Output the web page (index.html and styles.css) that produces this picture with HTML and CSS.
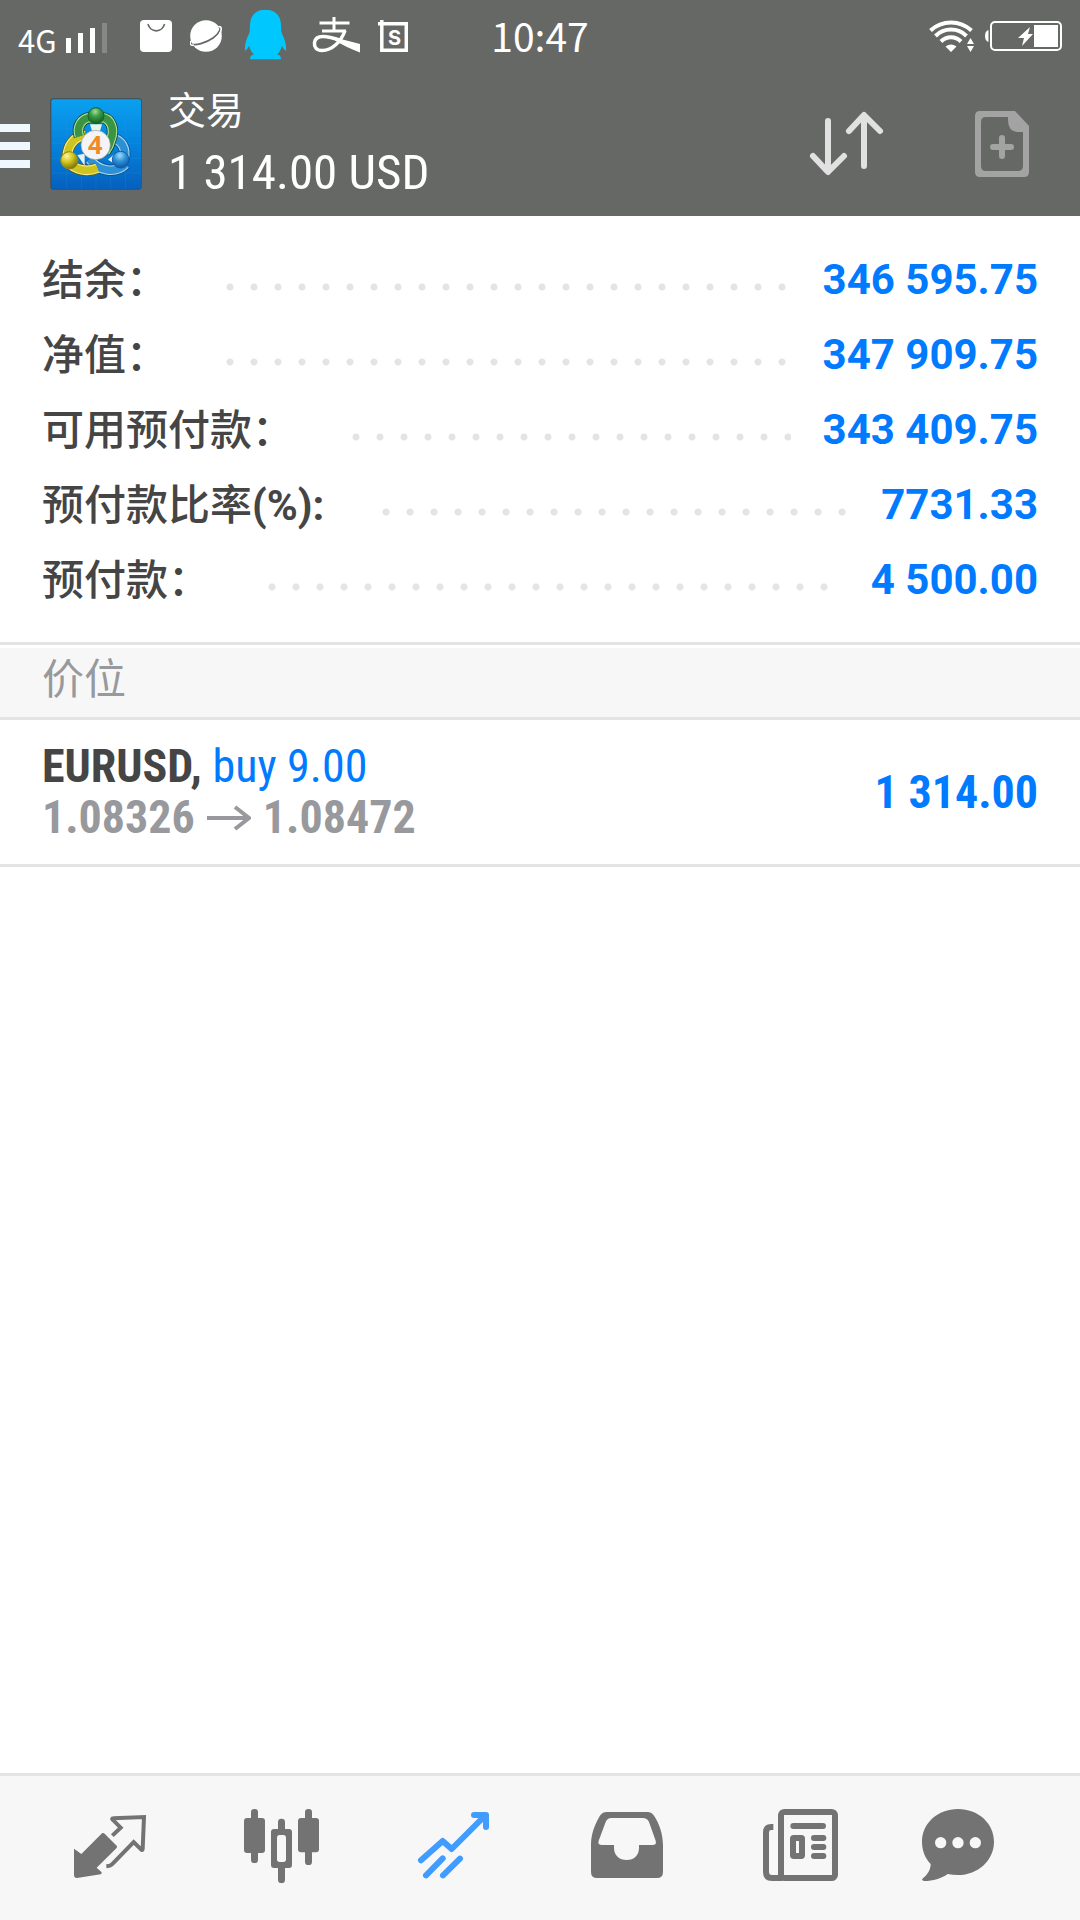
FILE: index.html
```html
<!DOCTYPE html>
<html lang="zh-CN">
<head>
<meta charset="utf-8">
<meta name="viewport" content="width=device-width, initial-scale=1">
<title>交易</title>
<link rel="stylesheet" href="styles.css">
</head>
<body>
<div class="app">
  <header class="header">
    <div class="status">
      <div class="status-left">
        <span class="network">4G</span>
        <svg class="signal" viewBox="66 10 42 52" width="42" height="52" aria-hidden="true">
          <path fill="#fff" d="M66 38h5v15h-5zM78 33h5v20h-5zM90 28h5v25h-5z"/>
          <path fill="#868885" d="M102 23h5v30h-5z"/>
        </svg>
        <div class="notices">
          <svg viewBox="140 10 32 52" width="32" height="52" aria-hidden="true">
            <rect x="140" y="20" width="32" height="32" rx="4" fill="#fff"/>
            <path d="M148 24a8.500 9 0 0 0 16.500 0" fill="none" stroke="#666865" stroke-width="1.600"/>
          </svg>
          <svg viewBox="190 10 32 52" width="32" height="52" aria-hidden="true">
            <circle cx="206" cy="36" r="15.800" fill="#fff"/>
            <path d="M218 27c4 0 2 6-5 11s-18 8-22 6" fill="none" stroke="#666865" stroke-width="1.600"/>
            <path d="M218 27c5-2 4 6-2 11M191 41c-2 3 0 5 3 4" fill="none" stroke="#fff" stroke-width="1.600"/>
          </svg>
          <svg viewBox="240 10 50 52" width="50" height="52" aria-hidden="true">
            <path fill="#00c8ff" d="M265.500 9.700c10 0 15 6 15.500 15 .3 3-.3 6 1 9 3 6 4.500 11 4 17-2-1-3-3-4-5-1 4-3 7-5 9 3 0 4 2 4 4.500h-31c0-2.500 1-4.500 4-4.500-2-2-4-5-5-9-1 2-2 4-4 5-.5-6 1-11 4-17 1.300-3 .7-6 1-9 .5-9 5.500-15 15.500-15z"/>
          </svg>
          <svg viewBox="308 10 52 52" width="52" height="52" aria-hidden="true">
            <path fill="none" stroke="#fff" stroke-width="3" d="M334 17v14M319.500 23h30M322 31h24"/>
            <path fill="none" stroke="#fff" stroke-width="3.500" d="M345 30.500C341 42 332 50.500 322 50.500c-6 0-8-4-7.500-8 .6-4 4-6 8.500-6 6 0 12 2 18 4"/>
            <path fill="#fff" d="M335 37.500l25 6.500v8.500c-8-3-17-7-25-12z"/>
          </svg>
          <svg viewBox="378 10 30 52" width="30" height="52" aria-hidden="true">
            <path fill="none" stroke="#fff" stroke-width="3.500" d="M381.800 20v30.300h24.500V23.800H378"/>
            <text x="394.500" y="44.500" class="badge-letter">S</text>
          </svg>
        </div>
      </div>
      <time class="clock">10:47</time>
      <div class="status-right">
        <svg viewBox="928 10 48 52" width="48" height="52" aria-hidden="true">
          <g fill="none" stroke="#fff" stroke-width="4">
            <path d="M930.500 30.500a30 30 0 0 1 41 0"/>
            <path d="M935.500 36a22 22 0 0 1 31 0"/>
            <path d="M941 41.500a14 14 0 0 1 20 0"/>
          </g>
          <path fill="#fff" d="M945.500 46.500q5.500-4 11 0l-5.500 5.500zM970.500 38l3.500 6h-7zM967 46h7l-3.500 6z"/>
        </svg>
        <svg viewBox="984 10 78 52" width="78" height="52" aria-hidden="true">
          <path fill="#fff" d="M988.500 30v12q-3.500-1-3.500-6t3.500-6z"/>
          <rect x="991" y="22" width="70" height="28" rx="4" fill="none" stroke="#fff" stroke-width="2"/>
          <path fill="#fff" d="M1034 25h24v22h-24zM1030 27l-12 11h6l-2 8 11-12h-5z"/>
        </svg>
      </div>
    </div>
    <div class="toolbar">
      <button class="menu" type="button" aria-label="菜单"><span></span><span></span><span></span></button>
      <svg class="logo" viewBox="30 23 276 276" width="92" height="92" role="img" aria-label="MetaTrader 4">
        <defs>
          <linearGradient id="sky" x1="0" y1="0" x2="0" y2="1"><stop offset="0" stop-color="#0aa0f0"/><stop offset=".5" stop-color="#0583dc"/><stop offset="1" stop-color="#0560bd"/></linearGradient>
          <radialGradient id="green" cx=".45" cy=".25" r=".8"><stop offset="0" stop-color="#a5dca0"/><stop offset=".4" stop-color="#3a9b41"/><stop offset="1" stop-color="#0c5a20"/></radialGradient>
          <radialGradient id="yellow" cx=".35" cy=".25" r=".8"><stop offset="0" stop-color="#fbf5a0"/><stop offset=".45" stop-color="#d3c51f"/><stop offset="1" stop-color="#746b0c"/></radialGradient>
          <radialGradient id="blue" cx=".45" cy=".25" r=".8"><stop offset="0" stop-color="#9fdcfa"/><stop offset=".45" stop-color="#2d91d6"/><stop offset="1" stop-color="#0850a0"/></radialGradient>
        </defs>
        <rect x="31" y="24" width="274" height="274" rx="9" fill="#3c4a52"/>
        <rect x="34" y="27" width="269" height="270" rx="6" fill="url(#sky)"/>
        <path d="M80 27v270M124 27v270M168 27v270M212 27v270M256 27v270M34 72h269M34 116h269M34 160h269M34 204h269M34 248h269" stroke="#35a5ee" stroke-opacity=".25" stroke-width="2"/>
        <g fill="none" stroke-linejoin="round">
          <path d="M218 144C246 150 260 176 252 206M256 222C228 250 176 244 150 208" stroke="#0b4e94" stroke-width="34"/>
          <path d="M218 144C246 150 260 176 252 206M256 222C228 250 176 244 150 208" stroke="#a5d8f2" stroke-width="29"/>
          <path d="M218 144C246 150 260 176 252 206M256 222C228 250 176 244 150 208" stroke="#2d8fd4" stroke-width="22"/>
          <path d="M136 136C104 138 82 164 82 200M86 216C106 240 142 246 172 234" stroke="#5f5a10" stroke-width="34"/>
          <path d="M136 136C104 138 82 164 82 200M86 216C106 240 142 246 172 234" stroke="#f2ee8c" stroke-width="29"/>
          <path d="M136 136C104 138 82 164 82 200M86 216C106 240 142 246 172 234" stroke="#cfc41f" stroke-width="22"/>
          <path d="M118 138C108 108 126 84 150 82h36C212 84 226 116 212 150 208 166 202 176 196 184" stroke="#0b4a20" stroke-width="34"/>
          <path d="M118 138C108 108 126 84 150 82h36C212 84 226 116 212 150 208 166 202 176 196 184" stroke="#a9dd9c" stroke-width="29"/>
          <path d="M118 138C108 108 126 84 150 82h36C212 84 226 116 212 150 208 166 202 176 196 184" stroke="#3a9442" stroke-width="22"/>
        </g>
        <path d="M150 102h36l-6 20h-24z" fill="#e8f4e4"/>
        <path d="M112 194l22-4v36zM204 208l20-18 2 32z" fill="#e5f2fa"/>
        <circle cx="168" cy="76" r="24" fill="url(#green)" stroke="#11632a" stroke-width="3"/>
        <circle cx="88" cy="210" r="26" fill="url(#yellow)" stroke="#908611" stroke-width="3"/>
        <circle cx="242" cy="208" r="25" fill="url(#blue)" stroke="#0a5dac" stroke-width="3"/>
        <circle cx="167" cy="164" r="44" fill="#f4f4f6" stroke="#8d9a98" stroke-width="2"/>
        <text x="166" y="192" class="logo-digit">4</text>
      </svg>
      <div class="heading">
        <h1 class="title">交易</h1>
        <p class="total">1 314.00 USD</p>
      </div>
      <button class="tool" type="button" aria-label="排序">
        <svg viewBox="0 0 84 72" width="84" height="72" fill="none" stroke="#e1e1e1" stroke-width="6" stroke-linecap="round" stroke-linejoin="round" aria-hidden="true">
          <path d="M24 13v50M9 48l15 16 16-16M60 58V8M45 23L60 7l16 16"/>
        </svg>
      </button>
      <button class="tool" type="button" aria-label="新订单">
        <svg viewBox="0 0 54 66" width="54" height="66" aria-hidden="true">
          <path fill="#a3a3a3" fill-rule="evenodd" d="M5 0h35l14 15v46q0 5-5 5H5q-5 0-5-5V5q0-5 5-5zM11 6q-5 0-5 5v44q0 5 5 5h32q5 0 5-5V21h-6q-9-1-9-12V6z"/>
          <path fill="none" stroke="#a3a3a3" stroke-width="6" stroke-linecap="round" d="M27 27v18M18 36h18"/>
        </svg>
      </button>
    </div>
  </header>

  <main class="content">
    <dl class="summary">
      <div class="row"><dt>结余：</dt><dd>346 595.75</dd></div>
      <div class="row"><dt>净值：</dt><dd>347 909.75</dd></div>
      <div class="row"><dt>可用预付款：</dt><dd>343 409.75</dd></div>
      <div class="row"><dt>预付款比率<b>(%):</b></dt><dd>7731.33</dd></div>
      <div class="row"><dt>预付款：</dt><dd>4 500.00</dd></div>
    </dl>
    <h2 class="section">价位</h2>
    <ul class="positions">
      <li class="position">
        <div class="deal">
          <p class="symbol">EURUSD, <span class="side">buy 9.00</span></p>
          <p class="prices">1.08326
            <svg viewBox="0 0 44 26" width="44" height="26" role="img" aria-label="至"><path d="M0 13h41M28 2l14 11-14 11" fill="none" stroke="#98999d" stroke-width="4"/></svg>
            1.08472</p>
        </div>
        <span class="profit">1 314.00</span>
      </li>
    </ul>
  </main>

  <nav class="tabs">
    <button class="tab" type="button" aria-label="行情">
      <svg viewBox="186 120 288 288" width="96" height="96" aria-hidden="true">
        <path fill="currentColor" d="M306 220q4-3 8 1l36 36q3 4-1 8l-59 58 15 14q1 5-3 6l-71 11q-9 0-9-9v-79l22 16z"/>
        <path fill="none" stroke="currentColor" stroke-width="12" d="M337 227l25-24-25-25q-2-3 3-3l92-4-4 96q-1 5-5 1l-22-22-65 67q-5 5-17 6"/>
      </svg>
    </button>
    <button class="tab" type="button" aria-label="图表">
      <svg viewBox="702 120 288 288" width="96" height="96" aria-hidden="true">
        <g fill="currentColor">
          <rect x="753" y="147" width="21" height="162" rx="10"/><rect x="732" y="174" width="63" height="105" rx="9"/>
          <rect x="834" y="176" width="21" height="193" rx="10"/><rect x="813" y="207" width="63" height="117" rx="9"/>
          <rect x="915" y="147" width="21" height="168" rx="10"/><rect x="894" y="174" width="63" height="103" rx="9"/>
        </g>
        <rect x="831" y="225" width="27" height="81" rx="8" fill="#f7f7f7"/>
      </svg>
    </button>
    <button class="tab active" type="button" aria-label="交易" aria-current="page">
      <svg viewBox="138 120 288 288" width="96" height="96" fill="none" stroke="currentColor" stroke-width="18" stroke-linecap="round" stroke-linejoin="round" aria-hidden="true">
        <path d="M183 301l65-58 27 24 98-98M342 165h36v36"/>
        <path d="M198 346l50-51M249 346l51-50"/>
        <path fill="currentColor" stroke="none" d="M356 165h28v30z"/>
      </svg>
    </button>
    <button class="tab" type="button" aria-label="历史">
      <svg viewBox="654 120 288 288" width="96" height="96" aria-hidden="true">
        <path fill="currentColor" fill-rule="evenodd" d="M738 156h126q10 0 16 8c18 26 29 58 29 92v80q0 18-18 18H711q-18 0-18-18v-86c1-30 13-62 29-86q6-8 16-8zM754 174q-12 0-17 12l-21 56q-4 13 10 13h36v8c0 23 16 37 38 37s37-14 37-37v-8h40q14 0 10-13l-20-56q-5-12-19-12z"/>
      </svg>
    </button>
    <button class="tab" type="button" aria-label="新闻">
      <svg viewBox="90 120 288 288" width="96" height="96" fill="none" stroke="currentColor" stroke-width="18" aria-hidden="true">
        <rect x="183" y="156" width="162" height="198" rx="10"/>
        <path d="M160 201h-6q-16 0-16 16v119q0 18 18 18h30"/>
        <path stroke-linecap="round" d="M220 198h89M282 234h28M282 261h28M282 288h28"/>
        <rect x="219" y="234" width="27" height="54" rx="2"/>
      </svg>
    </button>
    <button class="tab" type="button" aria-label="消息">
      <svg viewBox="606 120 288 288" width="96" height="96" aria-hidden="true">
        <path fill="currentColor" d="M714 147c60 0 108 42 108 98s-48 100-108 100q-16 0-31-3c-20 14-44 21-70 21q-11-1-4-8c14-12 23-26 23-43-17-18-26-41-26-67 0-56 48-98 108-98z"/>
        <g fill="#f7f7f7"><circle cx="662" cy="248" r="17"/><circle cx="714" cy="248" r="17"/><circle cx="766" cy="248" r="17"/></g>
      </svg>
    </button>
  </nav>
</div>
</body>
</html>
```
FILE: styles.css
```css
* {
  box-sizing: border-box;
  margin: 0;
  padding: 0;
}

body {
  background: #fff;
  color: #454545;
  font-family: Roboto, "Noto Sans CJK SC", sans-serif;
}

button {
  border: 0;
  background: none;
  color: inherit;
  font: inherit;
  cursor: pointer;
}

svg {
  display: block;
  flex: none;
}

.app {
  display: flex;
  flex-direction: column;
  min-height: 100vh;
}

.header {
  background: #666865;
  color: #fff;
}

.status {
  display: grid;
  grid-template-columns: 1fr auto 1fr;
  align-items: center;
  height: 72px;
  padding: 0 18px;
}

.status-left,
.status-right,
.notices {
  display: flex;
  align-items: center;
}

.network {
  width: 48px;
  padding-top: 8px;
  font-family: "Noto Sans CJK SC", sans-serif;
  font-size: 31px;
  line-height: 40px;
}

.notices {
  gap: 18px;
  margin-left: 32px;
}

.badge-letter {
  fill: #fff;
  font: bold 20px Inter, sans-serif;
  text-anchor: middle;
}

.clock {
  padding-bottom: 2px;
  font-family: "Noto Sans CJK SC", sans-serif;
  font-size: 39px;
  line-height: 70px;
}

.status-right {
  justify-content: flex-end;
  gap: 8px;
}

.toolbar {
  display: flex;
  align-items: center;
  height: 144px;
}

.menu {
  display: flex;
  flex-direction: column;
  gap: 10px;
  width: 30px;
  padding-top: 4px;
}

.menu span {
  height: 8px;
  background: #eff7ff;
}

.logo {
  margin-left: 20px;
}

.logo-digit {
  fill: #f08a24;
  font: bold 76px "Open Sans", sans-serif;
  text-anchor: middle;
}

.heading {
  flex: 1;
  margin-left: 26px;
}

.title {
  font-size: 38px;
  font-weight: 400;
  line-height: 58px;
}

.total {
  font-family: "Roboto Condensed", "Liberation Sans Narrow", Roboto, sans-serif;
  font-size: 49px;
  line-height: 66px;
}

.tool {
  display: flex;
  align-items: center;
  justify-content: center;
  width: 156px;
  height: 144px;
}

.content {
  flex: 1;
}

.summary {
  padding: 26px 42px 25px;
  border-bottom: 3px solid #e4e4e4;
}

.row {
  display: flex;
  height: 75px;
  font-size: 42px;
  line-height: 75px;
}

.row dt {
  flex: 1;
  display: flex;
  font-weight: 500;
  line-height: 77px;
}

.row dt::after {
  content: "";
  flex: 1;
  margin: 0 32px 0 58px;
  background: radial-gradient(circle at 4px 45px, #e4e4e4 3px, transparent 4px) 0 0 / 24px 75px repeat-x;
}

.row dd {
  color: #007aff;
  font-weight: 700;
}

.section {
  margin-top: 3px;
  padding: 2px 42px 7px;
  background: #f7f7f7;
  border-bottom: 3px solid #e4e4e4;
  color: #98999d;
  font-size: 42px;
  font-weight: 400;
  line-height: 60px;
}

.positions {
  list-style: none;
}

.position {
  display: flex;
  align-items: center;
  justify-content: space-between;
  height: 147px;
  padding: 0 42px;
  border-bottom: 3px solid #e4e4e4;
  font-family: "Roboto Condensed", "Liberation Sans Narrow", Roboto, sans-serif;
  font-size: 46px;
  font-weight: 700;
  line-height: 51px;
}

.side {
  color: #007aff;
  font-weight: 400;
}

.prices {
  display: flex;
  align-items: center;
  gap: 12px;
  color: #98999d;
}

.profit {
  color: #007aff;
}

.tabs {
  display: flex;
  padding: 0 24px;
  border-top: 3px solid #e4e4e4;
  background: #f7f7f7;
  color: #737373;
}

.tab {
  flex: 1;
  display: flex;
  justify-content: center;
  padding: 24px 0;
}

.tab.active {
  color: #409cff;
}
```
